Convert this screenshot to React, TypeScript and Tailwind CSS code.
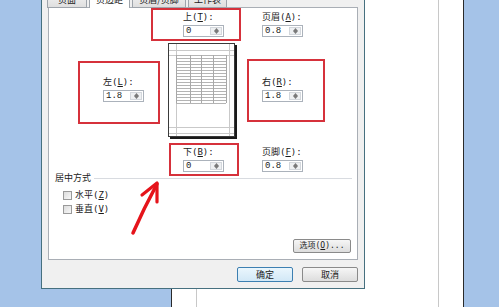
import React from "react"

const cjk = "font-['DejaVu_Sans_Mono','Noto_Sans_CJK_SC',monospace]"

function Tri({ down }: { down?: boolean }) {
  return (
    <svg width="5" height="3" viewBox="0 0 5 3">
      <path d={down ? "M0 0 L5 0 L2.5 3 Z" : "M0 3 L5 3 L2.5 0 Z"} fill="#7a7a7a" />
    </svg>
  )
}

function Field({ label, k, value }: { label: string; k: string; value: string }) {
  return (
    <div className="flex w-[41px] flex-col">
      <div className={`h-[13px] whitespace-nowrap text-[9px] leading-[13px] text-[#1a1a1a] ${cjk}`}>
        {label}(<span className="underline">{k}</span>):
      </div>
      <div className="mt-[1px] flex h-[12px] w-[41px] border border-[#abb2bb] bg-white">
        <span className="flex-1 pl-[2px] font-['Liberation_Mono',monospace] text-[9px] leading-[10px] text-[#1a1a1a]">
          {value}
        </span>
        <div className="my-[1px] mr-[1px] flex w-[12px] flex-col border border-[#d3d7dc] bg-[#eef0f2]">
          <div className="flex flex-1 items-center justify-center">
            <Tri />
          </div>
          <div className="flex flex-1 items-center justify-center">
            <Tri down />
          </div>
        </div>
      </div>
    </div>
  )
}

function Preview() {
  const rows = Array.from({ length: 17 }, (_, i) => 12 + i * 3)
  return (
    <svg width="69" height="96" viewBox="0 0 69 96">
      <rect x="0.5" y="0.5" width="66" height="93" fill="#fff" stroke="#3a3a3a" />
      <rect x="67" y="2" width="2" height="94" fill="#1a1a1a" />
      <rect x="2" y="94" width="67" height="2" fill="#1a1a1a" />
      {/* margins */}
      <line x1="8.5" y1="1" x2="8.5" y2="93" stroke="#c9c9c9" />
      <line x1="61.5" y1="1" x2="61.5" y2="93" stroke="#c9c9c9" />
      <line x1="1" y1="7.5" x2="66" y2="7.5" stroke="#c9c9c9" />
      <line x1="1" y1="12.5" x2="66" y2="12.5" stroke="#c9c9c9" />
      <line x1="1" y1="84.5" x2="66" y2="84.5" stroke="#c9c9c9" />
      <line x1="1" y1="90.5" x2="66" y2="90.5" stroke="#c9c9c9" />
      {/* table */}
      {rows.map((y) => (
        <line key={y} x1="8" y1={y + 0.5} x2="58" y2={y + 0.5} stroke="#b4b4b4" />
      ))}
      {[8, 22, 33, 45, 58].map((x) => (
        <line key={x} x1={x + 0.5} y1="12" x2={x + 0.5} y2="60" stroke="#a8a8a8" />
      ))}
    </svg>
  )
}

function Check({ label, k }: { label: string; k: string }) {
  return (
    <div className="flex h-[14px] items-center">
      <span className="h-[9px] w-[9px] border border-[#9a9a9a] bg-gradient-to-br from-[#dcdcdc] to-[#f8f8f8]" />
      <span className={`ml-[3px] whitespace-nowrap text-[9px] leading-[14px] text-[#1a1a1a] ${cjk}`}>
        {label}(<span className="underline">{k}</span>)
      </span>
    </div>
  )
}

const tabs = [
  { label: "页面", w: "w-[40px]" },
  { label: "页边距", w: "w-[41px]", active: true },
  { label: "页眉/页脚", w: "w-[54px]" },
  { label: "工作表", w: "w-[39px]" },
]

export default function App() {
  return (
    <div className="relative h-[307px] w-[499px] overflow-hidden bg-[#a5c3e8] font-['Noto_Sans_CJK_SC',sans-serif]">
      {/* window behind the dialog */}
      <div className="flex h-full">
        <div className="w-[171px]" />
        <div className="h-full w-[293px] border-x border-[#2a2a2a] bg-white">
          <div className="ml-[24px] h-full w-[243px] border-x border-[#c8c8c8]" />
        </div>
      </div>

      {/* page setup dialog */}
      <div className="absolute left-[41px] top-[-12px] flex h-[301px] w-[324px] flex-col border border-[#46707f] bg-[#f0f0f0]">
        <div className="relative z-10 ml-[5px] mt-[2px] flex h-[17px] items-end gap-[2px]">
          {tabs.map((t) => (
            <div
              key={t.label}
              className={`${t.w} flex items-center justify-center border border-[#9ea4ab] text-[9px] text-[#1a1a1a] ${
                t.active ? "h-[17px] border-b-0 bg-white" : "h-[16px] bg-gradient-to-b from-[#f4f4f4] to-[#dfdfdf]"
              }`}
            >
              {t.label}
            </div>
          ))}
        </div>

        <div className="mx-[6px] -mt-[1px] flex h-[253px] flex-col border border-[#a9aeb5] bg-white">
          <div className="flex pl-[54px] pt-[3px]">
            <div className="w-[41px] pt-[65px]">
              <Field label="左" k="L" value="1.8" />
            </div>
            <div className="ml-[24px] flex w-[69px] flex-col">
              <div className="ml-[15px]">
                <Field label="上" k="T" value="0" />
              </div>
              <div className="mt-[6px]">
                <Preview />
              </div>
              <div className="ml-[15px] mt-[7px]">
                <Field label="下" k="B" value="0" />
              </div>
            </div>
            <div className="ml-[25px] flex flex-col">
              <Field label="页眉" k="A" value="0.8" />
              <div className="mt-[39px]">
                <Field label="右" k="R" value="1.8" />
              </div>
              <div className="mt-[44px]">
                <Field label="页脚" k="F" value="0.8" />
              </div>
            </div>
          </div>

          <div className="ml-[6px] mr-[5px] flex h-[12px] items-center">
            <span className="whitespace-nowrap text-[9px] leading-[12px] text-[#1a1a1a]">居中方式</span>
            <div className="ml-[3px] flex-1 border-t border-[#d8dbe0]" />
          </div>
          <div className="ml-[14px] mt-[4px] flex flex-col">
            <Check label="水平" k="Z" />
            <Check label="垂直" k="V" />
          </div>

          <div className="flex-1" />
          <div className="mb-[6px] mr-[6px] flex justify-end">
            <button className={`h-[14px] w-[58px] rounded-[2px] border border-[#8a8a8a] bg-gradient-to-b from-[#f6f6f6] to-[#dddddd] text-[8px] leading-[12px] text-[#1a1a1a] ${cjk}`}>
              选项(<span className="underline">O</span>)...
            </button>
          </div>
        </div>

        <div className="mr-[6px] mt-[7px] flex justify-end gap-[9px]">
          <button className="h-[15px] w-[56px] rounded-[2px] border border-[#3c7fb1] bg-gradient-to-b from-[#eaf6fd] to-[#d2e8f6] text-[9px] leading-[13px] text-[#1a1a1a]">
            确定
          </button>
          <button className="h-[15px] w-[56px] rounded-[2px] border border-[#8a8a8a] bg-gradient-to-b from-[#f6f6f6] to-[#dddddd] text-[9px] leading-[13px] text-[#1a1a1a]">
            取消
          </button>
        </div>
      </div>

      {/* red annotations */}
      <div className="absolute left-[151px] top-[8px] h-[33px] w-[90px] border-2 border-[#d6313b]" />
      <div className="absolute left-[78px] top-[61px] h-[63px] w-[82px] border-2 border-[#d6313b]" />
      <div className="absolute left-[247px] top-[59px] h-[63px] w-[78px] border-2 border-[#d6313b]" />
      <div className="absolute left-[169px] top-[143px] h-[33px] w-[70px] border-2 border-[#d6313b]" />
      <svg className="absolute left-[128px] top-[178px]" width="36" height="60" viewBox="0 0 36 60">
        <path d="M5 55 Q16 30 29 6" fill="none" stroke="#e5141b" strokeWidth="3.5" strokeLinecap="round" />
        <path d="M14 17 L29 5 L29 24" fill="none" stroke="#e5141b" strokeWidth="3.2" strokeLinecap="round" strokeLinejoin="round" />
      </svg>
    </div>
  )
}
